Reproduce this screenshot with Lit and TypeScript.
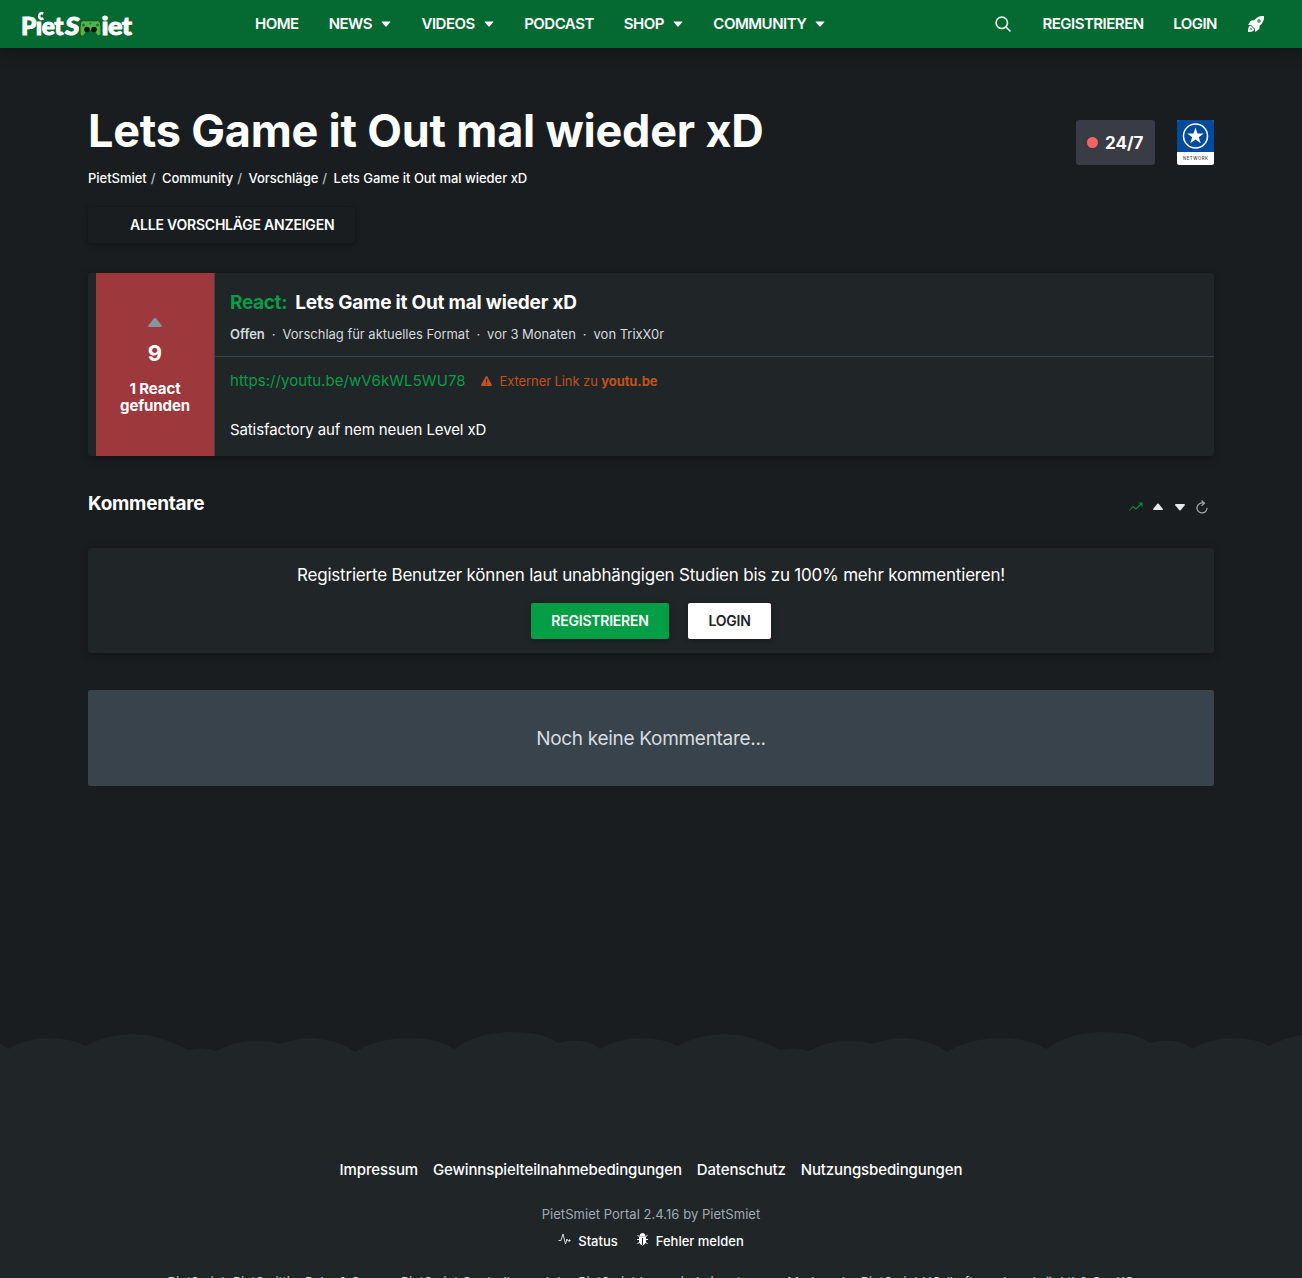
import { LitElement, html, css, svg } from "lit";
import { customElement } from "lit/decorators.js";

const caret = html`<svg class="caret" viewBox="0 0 10 6" width="10" height="6"><path d="M1 .5h8q.8 0 .3.6L5.7 5.3q-.7.7-1.4 0L.7 1.1Q.2.5 1 .5z" fill="currentColor"/></svg>`;

const cloud = (x: number) => svg`<path transform="translate(${x} 0)" d="M0 48V17Q19 6 41 6T77 14Q100 2 125 2T180 18Q194 14 209 19Q227 9 246 9T272 12Q288 6 305 6Q331 8 347 20Q371 6 400 6T446 17Q470 0 503 0T550 11Q577 4 592 17V48z"/>`;

@customElement("app-root")
export class AppRoot extends LitElement {
  static styles = css`
    :host { display: block; height: 1278px; overflow: hidden; background: #191d20; color: #fff; font-family: Inter, sans-serif; font-size: 15px; line-height: 1.5; }
    * { box-sizing: border-box; }
    .page { display: flex; flex-direction: column; height: 1278px; overflow: hidden; }
    svg { display: block; flex: none; }
    header { height: 48px; flex: none; background: #046a32; display: flex; align-items: center; font-size: 15px; font-weight: 600; letter-spacing: -.5px; box-shadow: 0 2px 18px rgba(0,0,0,.35); white-space: nowrap; }
    .logo { margin-left: 20px; width: 235px; }
    nav { display: flex; gap: 30px; flex: 1; }
    nav span { display: flex; align-items: center; gap: 9px; }
    nav .caret { margin-right: .4px; }
    .tools { display: flex; align-items: center; margin-right: 37px; }
    .tools .reg { margin: 0 29.5px 0 31px; }
    .tools .log { margin-right: 30px; }
    main { margin: 0 88px; display: flex; flex-direction: column; flex: 1; min-height: 0; }
    .top { display: flex; justify-content: space-between; height: 144px; padding-top: 50px; }
    h1 { margin: 1px 0 0; font-size: 45px; line-height: 64px; font-weight: 700; letter-spacing: -.21px; white-space: nowrap; }
    .crumbs { display: flex; gap: 4px; font-size: 13px; line-height: 20px; margin-top: 5px; font-weight: 500; letter-spacing: -.03px; white-space: nowrap; }
    .crumbs i { font-style: normal; color: #b8bec4; margin-right: 2.5px; }
    .badges { display: flex; gap: 22px; padding-top: 22px; }
    .live { width: 79px; height: 45px; border-radius: 3px; background: #3a3c45; display: flex; align-items: center; gap: 7px; padding-left: 11px; font-size: 17px; font-weight: 700; }
    .live b { font-weight: 700; padding-top: 2px; }
    .dot { width: 11px; height: 11px; border-radius: 50%; background: #f56565; }
    .all { margin-top: 15px; width: 267px; height: 36px; display: flex; align-items: center; padding: 0 0 2px 42px; font-size: 14px; font-weight: 600; letter-spacing: -.21px; box-shadow: 0 1px 5px rgba(0,0,0,.4); border-radius: 3px; white-space: nowrap; }
    .card { background: #202528; border-radius: 3px; box-shadow: 0 2px 8px rgba(0,0,0,.28); }
    .idea { margin-top: 30px; height: 183px; display: flex; padding-left: 8px; }
    .vote { width: 119px; background: #9d383c; border-right: 1px solid #3a444d; display: flex; flex-direction: column; align-items: center; padding-top: 44px; }
    .count { font-size: 22px; font-weight: 700; line-height: 30px; margin-top: 10px; }
    .found { font-weight: 700; text-align: center; line-height: 17px; margin-top: 12px; letter-spacing: -.1px; }
    .body { flex: 1; }
    .head { height: 84px; border-bottom: 1px solid #3a444d; padding: 16px 15px 0; }
    .title { display: flex; gap: 8px; font-size: 19px; font-weight: 700; line-height: 28px; letter-spacing: -.21px; }
    .green { color: #089d46; }
    .title .green { letter-spacing: -.35px; }
    .link .green { letter-spacing: .06px; }
    .meta { display: flex; gap: 7px; font-size: 13px; line-height: 20px; margin-top: 7px; color: #d5dade; white-space: nowrap; letter-spacing: -.02px; }
    .meta b { font-weight: 600; }
    .text { padding: 12px 15px; line-height: 24px; }
    .link { display: flex; align-items: center; }
    .warn { display: flex; align-items: center; gap: 8px; margin-left: 15px; font-size: 13px; color: #c0511b; letter-spacing: -.09px; }
    .desc { margin-top: 25px; letter-spacing: -.11px; }
    .comhead { display: flex; justify-content: space-between; margin-top: 33px; height: 59px; padding-right: 5px; }
    h2 { margin: 0; font-size: 19px; line-height: 30px; font-weight: 700; letter-spacing: -.28px; }
    .sort { display: flex; align-items: center; gap: 8px; height: 36px; }
    .join { height: 105px; display: flex; flex-direction: column; align-items: center; padding-top: 14px; font-size: 17px; line-height: 26px; letter-spacing: -.2px; }
    .buttons { display: flex; gap: 19px; margin-top: 15px; font-size: 14px; font-weight: 600; letter-spacing: -.22px; }
    .btn { height: 36px; display: flex; align-items: center; justify-content: center; border-radius: 2px; box-shadow: 0 2px 6px rgba(0,0,0,.3); }
    .primary { width: 138px; background: #049e47; }
    .plain { width: 83px; background: #fff; color: #202428; }
    .empty { margin-top: 37px; height: 96px; padding-top: 2px; border-radius: 2px; background: #39434b; display: flex; align-items: center; justify-content: center; font-size: 19px; color: #d7dce0; letter-spacing: -.3px; }
    .clouds { width: 1302px; height: 48px; fill: #202528; }
    footer { height: 198px; flex: none; background: #202528; display: flex; flex-direction: column; align-items: center; padding-top: 78px; white-space: nowrap; }
    .links { display: flex; gap: 14.9px; font-weight: 500; line-height: 24px; letter-spacing: -.12px; }
    .version { margin-top: 22px; font-size: 13px; line-height: 20px; color: #a0aab4; letter-spacing: .04px; }
    .status { display: flex; gap: 18px; font-size: 13px; line-height: 20px; font-weight: 500; margin-top: 7px; }
    .status span { display: flex; gap: 7px; }
    .legal { margin-top: 21px; font-size: 13px; line-height: 20px; color: #cbd5e0; letter-spacing: -.04px; }
  `;

  logo() {
    return html`<svg class="logo" width="235" height="36" viewBox="0 0 235 36">
      <g fill="#fff" stroke="#fff" stroke-width=".9" font-family="Lato" font-weight="900" font-size="25">
        <text x="1" y="28.700" textLength="42" lengthAdjust="spacingAndGlyphs">Pıet</text>
        <text x="45" y="28.700" font-style="italic" textLength="14" lengthAdjust="spacingAndGlyphs">S</text>
        <text x="81.500" y="28.700" textLength="30" lengthAdjust="spacingAndGlyphs">iet</text>
      </g>
      <path d="M23.300 7.600c-3.300-1-4.300.7-4.100 3 .2 2.400 2.200 2.700 4.300 1.700" fill="none" stroke="#fff" stroke-width="2.600"/>
      <path d="M61 15.500q2-1.500 4-.7h10q3-1 5 1 1.500 5 1 11.500-.5 3.500-3.500 2.500L74 25h-7l-3.500 5q-3 1-3.500-2.500-.5-7 1-12z" fill="#52b548" stroke="#174c20"/>
      <g fill="#10150f"><circle cx="67" cy="23.500" r="2.800"/><circle cx="74" cy="23.500" r="2.800"/></g>
      <g fill="#23732e"><circle cx="63.500" cy="19" r="1.500"/><circle cx="77.500" cy="19" r="1.500"/><circle cx="70.500" cy="17.500" r="1"/></g>
    </svg>`;
  }

  render() {
    return html`<div class="page">
      <header>
        ${this.logo()}
        <nav><span>HOME</span><span>NEWS ${caret}</span><span>VIDEOS ${caret}</span><span>PODCAST</span><span>SHOP ${caret}</span><span>COMMUNITY ${caret}</span></nav>
        <div class="tools">
          <svg width="16" height="16" viewBox="0 0 16 16" fill="none" stroke="#e4f1e9" stroke-width="1.700" stroke-linecap="round"><circle cx="6.800" cy="6.800" r="5.700"/><path d="m11 11 4 4"/></svg>
          <span class="reg">REGISTRIEREN</span><span class="log">LOGIN</span>
          <svg width="18" height="18" viewBox="0 0 18 18"><path fill="#fff" d="M17 1q-6-.7-9.700 4.300L4 5.500 1 9.700l3 .2L8 14l.2 3 4.200-3 .2-3.300Q17.600 7 17 1z"/><circle cx="12" cy="6" r="1.700" fill="#046a32"/><circle cx="12" cy="6" r=".7" fill="#fff"/><path d="M1 17q-.3-5.500 2.500-6.500l4 4Q6 17.300 1 17z" fill="#fff"/><path d="M3 14.800q.3-1.800 1.300-1.500t-.1 1.500" fill="none" stroke="#046a32" stroke-width=".8"/></svg>
        </div>
      </header>
      <main>
        <div class="top">
          <div><h1>Lets Game it Out mal wieder xD</h1>
            <div class="crumbs"><span>PietSmiet</span><i>/</i><span>Community</span><i>/</i><span>Vorschläge</span><i>/</i><span>Lets Game it Out mal wieder xD</span></div></div>
          <div class="badges"><div class="live"><span class="dot"></span><b>24/7</b></div>
            <svg width="37" height="45" viewBox="0 0 37 45"><rect width="37" height="45" rx="2.500" fill="#fff"/><path d="M0 32V2.500Q0 0 2.500 0h32Q37 0 37 2.500V32z" fill="#004b9b"/><circle cx="18.500" cy="16" r="12" fill="none" stroke="#fff" stroke-width="1.500"/><path fill="#fff" d="m18.500 7.500 2 6h6.300l-5 3.700 1.900 6-5.200-3.700-5.200 3.700 1.900-6-5-3.700h6.300z"/><text x="18.500" y="40" text-anchor="middle" font-size="4.300" font-weight="500" fill="#444" textLength="25">NETWORK</text></svg>
          </div>
        </div>
        <div class="all">ALLE VORSCHLÄGE ANZEIGEN</div>
        <section class="card idea">
          <div class="vote"><svg width="16" height="11" viewBox="0 0 16 11"><path d="M7 1.200q1-.8 2 0l5.500 7q1 1.800-.5 1.800H2q-1.500 0-.5-1.800z" fill="#8795a1"/></svg>
            <div class="count">9</div><div class="found">1 React<br>gefunden</div></div>
          <div class="body">
            <div class="head"><div class="title"><span class="green">React:</span><span>Lets Game it Out mal wieder xD</span></div>
              <div class="meta"><b>Offen</b><span>·</span><span>Vorschlag für aktuelles Format</span><span>·</span><span>vor 3 Monaten</span><span>·</span><span>von TrixX0r</span></div></div>
            <div class="text"><div class="link"><span class="green">https://youtu.be/wV6kWL5WU78</span><span class="warn"><svg width="11" height="10" viewBox="0 0 11 10"><path d="M5.500 0Q6 0 6.300.5l4.400 8q.5 1.500-.7 1.500H1Q-.2 10 .3 8.500l4.400-8Q5 0 5.500 0z" fill="#c8531a"/><path d="M5.500 3v3.500M5.500 7.700v1" stroke="#202428" stroke-width="1.200"/></svg><span>Externer Link zu <b>youtu.be</b></span></span></div>
              <div class="desc">Satisfactory auf nem neuen Level xD</div></div>
          </div>
        </section>
        <div class="comhead"><h2>Kommentare</h2><div class="sort">
          <svg width="14" height="14" viewBox="0 0 14 14" fill="none" stroke="#078c40" stroke-width="1.100"><path d="m.5 10.500 3.500-4 3 2.500 6-6M9.500 3H13v3.500"/></svg>
          <svg width="14" height="14" viewBox="0 0 14 14"><path d="M6.300 3.800q.7-.6 1.400 0l4 5q.6 1.200-.5 1.200H2.800q-1.100 0-.5-1.200z" fill="#e5e9ed"/></svg>
          <svg width="14" height="14" viewBox="0 0 14 14"><path d="M6.300 10.200q.7.6 1.400 0l4-5Q12.300 4 11.200 4H2.800Q1.700 4 2.300 5.200z" fill="#e5e9ed"/></svg>
          <svg width="14" height="14" viewBox="0 0 14 14" fill="none" stroke="#a5a9ad" stroke-width="1.200"><path d="M8.500 3.200A5 5 0 1 0 12 8M6.500.5l3 2.700-3 2.700"/></svg>
        </div></div>
        <section class="card join"><div>Registrierte Benutzer können laut unabhängigen Studien bis zu 100% mehr kommentieren!</div><div class="buttons"><span class="btn primary">REGISTRIEREN</span><span class="btn plain">LOGIN</span></div></section>
        <section class="empty">Noch keine Kommentare...</section>
      </main>
      <svg class="clouds" viewBox="0 0 1302 48">${[-584, 8, 600, 1192].map(cloud)}</svg>
      <footer>
        <div class="links"><span>Impressum</span><span>Gewinnspielteilnahmebedingungen</span><span>Datenschutz</span><span>Nutzungsbedingungen</span></div>
        <div class="version">PietSmiet Portal 2.4.16 by PietSmiet</div>
        <div class="status"><span><svg width="13" height="16" viewBox="0 0 13 16" fill="none" stroke="#d6dade"><path d="M.5 9.500H3L5 3l2.500 10L9 8l1 2h1"/><circle cx="11.500" cy="9.500" r=".7" fill="#fff"/></svg>Status</span>
        <span><svg width="13" height="16" viewBox="0 0 13 16" stroke="#fff" fill="none"><path d="M4 5Q4 2.500 6.500 2.500T9 5z" fill="#fff"/><path d="M3.500 6h6v5q-1 3-3 3t-3-3z" fill="#fff"/><path d="M1.500 4l2 2M11.500 4l-2 2M1 8.500h11M1.500 13l2-2M11.500 13l-2-2"/><path d="M6.500 7v7" stroke="#202528"/></svg>Fehler melden</span></div>
        <div class="legal">PietSmiet, PietSmittie, Pubs & Games, PietSmiet Controller und das PietSmiet Logo sind eingetragene Marken der PietSmiet UG (haftungsbeschränkt) & Co. KG</div>
      </footer>
    </div>`;
  }
}
